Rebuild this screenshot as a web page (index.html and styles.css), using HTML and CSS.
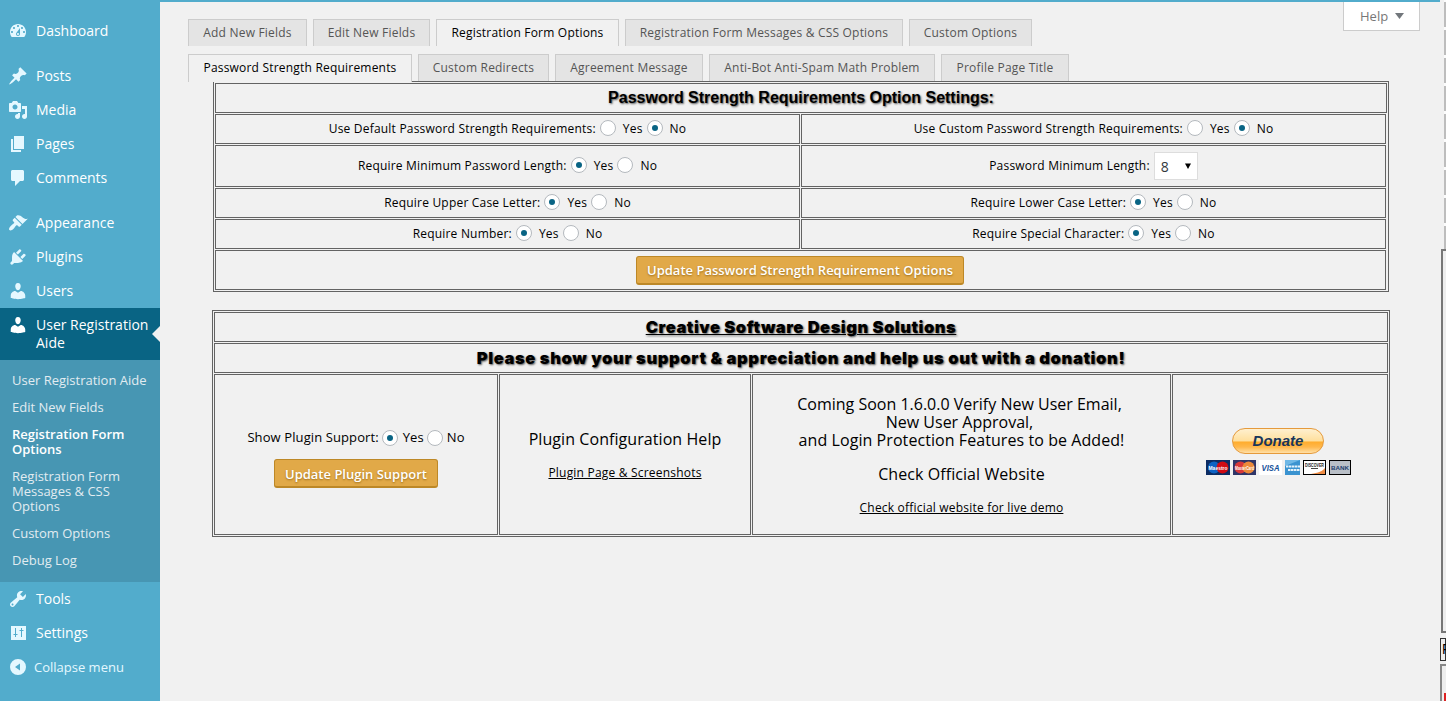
FILE: index.html
```html
<!DOCTYPE html>
<html lang="en">
<head>
<meta charset="utf-8">
<title>Registration Form Options</title>
<link rel="stylesheet" href="styles.css">
</head>
<body>
<div class="page">
<nav class="sidebar">
  <a class="item"><svg class="icon" viewBox="0 0 20 20"><path d="M3.76 16h12.48c1.1-1.37 1.76-3.11 1.76-5 0-4.42-3.58-8-8-8s-8 3.58-8 8c0 1.89.66 3.63 1.76 5zM10 4c.55 0 1 .45 1 1s-.45 1-1 1-1-.45-1-1 .45-1 1-1zM6 6c.55 0 1 .45 1 1s-.45 1-1 1-1-.45-1-1 .45-1 1-1zm8 0c.55 0 1 .45 1 1s-.45 1-1 1-1-.45-1-1 .45-1 1-1zm-5.37 5.55L12 7v6c0 1.1-.9 2-2 2s-2-.9-2-2c0-.57.24-1.08.63-1.45zM4 10c.55 0 1 .45 1 1s-.45 1-1 1-1-.45-1-1 .45-1 1-1zm12 0c.55 0 1 .45 1 1s-.45 1-1 1-1-.45-1-1 .45-1 1-1zm-5 3c0-.55-.45-1-1-1s-1 .45-1 1 .45 1 1 1 1-.45 1-1z" fill-rule="evenodd"/></svg><span>Dashboard</span></a>
  <div class="sep"></div>
  <a class="item"><svg class="icon" viewBox="0 0 20 20"><path d="M10.44 3.02l1.82-1.82 6.36 6.35-1.83 1.82c-1.05-.68-2.48-.57-3.41.36l-.75.75c-.92.93-1.04 2.35-.35 3.41l-1.83 1.82-2.41-2.41-2.8 2.79c-.42.42-3.38 2.71-3.8 2.29s1.86-3.39 2.28-3.81l2.79-2.79L4.1 9.36l1.83-1.82c1.05.69 2.48.57 3.4-.36l.75-.75c.93-.92 1.05-2.35.36-3.41z"/></svg><span>Posts</span></a>
  <a class="item"><svg class="icon" viewBox="0 0 20 20"><path d="M13 11V4c0-.55-.45-1-1-1h-1.67L9 1H5L3.67 3H2c-.55 0-1 .45-1 1v7c0 .55.45 1 1 1h10c.55 0 1-.45 1-1zM7 4.5c1.38 0 2.5 1.12 2.5 2.5S8.38 9.5 7 9.5 4.5 8.38 4.5 7 5.62 4.5 7 4.5zM14 6h5v10.5c0 1.38-1.12 2.5-2.5 2.5S14 17.88 14 16.5s1.12-2.5 2.5-2.5c.17 0 .34.02.5.05V9h-3V6zm-4 8.05V13h2v3.5c0 1.38-1.12 2.5-2.5 2.5S7 17.88 7 16.5 8.12 14 9.5 14c.17 0 .34.02.5.05z" fill-rule="evenodd"/></svg><span>Media</span></a>
  <a class="item"><svg class="icon" viewBox="0 0 20 20"><path d="M6 15V2h10v13H6zm-1 1h8v2H3V5h2v11z"/></svg><span>Pages</span></a>
  <a class="item"><svg class="icon" viewBox="0 0 20 20"><path d="M4.500 2h10c.8 0 1.500.7 1.500 1.500v8c0 .8-.7 1.500-1.500 1.500H12l-5 5v-5H4.500C3.700 13 3 12.300 3 11.500v-8C3 2.700 3.700 2 4.500 2z"/></svg><span>Comments</span></a>
  <div class="sep"></div>
  <a class="item"><svg class="icon" viewBox="0 0 20 20"><path d="M14.480 11.060L7.410 3.990l1.500-1.500c.5-.56 2.300-.47 3.510.32 1.210.8 1.430 1.280 2.910 2.100 1.180.64 2.450 1.260 4.450.85zm-.71.71L6.700 4.700 4.930 6.470c-.39.39-.39 1.020 0 1.410l1.060 1.060c.39.39.39 1.030 0 1.420-.6.6-1.430 1.110-2.210 1.690-.35.26-.7.53-1.010.84C1.430 14.230.4 16.080 1.400 17.070c.99 1 2.840-.03 4.180-1.360.31-.31.58-.66.85-1.020.57-.78 1.080-1.610 1.690-2.210.39-.39 1.020-.39 1.410 0l1.060 1.060c.39.39 1.020.39 1.410 0z"/></svg><span>Appearance</span></a>
  <a class="item"><svg class="icon" viewBox="0 0 20 20"><path d="M13.110 4.360L9.870 7.600 8 5.730l3.240-3.240c.35-.34 1.050-.2 1.560.32.52.51.66 1.210.31 1.550zm-8 1.770l.91-1.120 9.010 9.010-1.190.84c-.71.71-2.630 1.160-3.820 1.160H6.140L4.900 17.260c-.59.59-1.540.59-2.120 0-.59-.58-.59-1.530 0-2.120l1.240-1.240v-3.880c0-1.130.4-3.190 1.090-3.890zm7.260 3.970l3.240-3.240c.34-.35 1.040-.21 1.550.31.52.51.66 1.210.31 1.550l-3.240 3.250z"/></svg><span>Plugins</span></a>
  <a class="item"><svg class="icon" viewBox="0 0 20 20"><path d="M10 9.250c-2.270 0-2.730-3.440-2.730-3.440C7 4.020 7.820 2 9.970 2c2.160 0 2.980 2.020 2.710 3.810 0 0-.41 3.440-2.680 3.440zm0 2.570L12.720 10c2.390 0 4.520 2.330 4.520 4.530v2.490s-3.650 1.130-7.240 1.130c-3.650 0-7.240-1.130-7.240-1.130v-2.490c0-2.250 1.940-4.480 4.470-4.480z"/></svg><span>Users</span></a>
  <a class="item current"><svg class="icon" viewBox="0 0 20 20"><path d="M10 9.250c-2.270 0-2.730-3.440-2.730-3.440C7 4.020 7.820 2 9.970 2c2.160 0 2.980 2.020 2.710 3.810 0 0-.41 3.440-2.680 3.440zm0 2.570L12.720 10c2.390 0 4.520 2.330 4.520 4.530v2.490s-3.650 1.130-7.240 1.130c-3.650 0-7.240-1.130-7.240-1.130v-2.490c0-2.250 1.940-4.480 4.470-4.480z"/></svg><span>User Registration<br>Aide</span></a>
  <div class="submenu">
    <a>User Registration Aide</a>
    <a>Edit New Fields</a>
    <a class="on">Registration Form<br>Options</a>
    <a>Registration Form<br>Messages &amp; CSS<br>Options</a>
    <a>Custom Options</a>
    <a>Debug Log</a>
  </div>
  <a class="item"><svg class="icon" viewBox="0 0 20 20"><path d="M16.680 9.770c-1.340 1.340-3.300 1.670-4.950.99l-5.410 6.520c-.99.99-2.590.99-3.580 0s-.99-2.590 0-3.570l6.520-5.420c-.68-1.650-.35-3.610.99-4.950 1.280-1.280 3.120-1.620 4.720-1.060l-2.890 2.890 2.820 2.820 2.860-2.870c.53 1.580.18 3.390-1.080 4.650zM3.810 16.210c.4.39 1.040.39 1.430 0 .4-.4.4-1.040 0-1.430-.39-.4-1.030-.4-1.430 0-.39.39-.39 1.030 0 1.430z" fill-rule="evenodd"/></svg><span>Tools</span></a>
  <a class="item"><svg class="icon" viewBox="0 0 20 20"><path fill-rule="evenodd" d="M3 3h15v14H3zM7 5v6H5.500v1H7v2h1v-2h1.500v-1H8V5zM13 5v2h-1.500v1H13v6h1V8h1.500V7H14V5z"/></svg><span>Settings</span></a>
  <a class="item collapse"><svg class="icon" viewBox="0 0 20 20"><path fill-rule="evenodd" d="M10 2a8 8 0 1 0 0 16a8 8 0 1 0 0-16zM12 6.500v7L7 10z"/></svg><span>Collapse menu</span></a>
</nav>
<main class="content">
  <div class="help"><span>Help</span><svg width="9" height="6" viewBox="0 0 9 6"><path d="M0 0h9L4.500 6z"/></svg></div>
  <div class="tabs">
    <a class="w119">Add New Fields</a><a class="w117">Edit New Fields</a><a class="w183 on">Registration Form Options</a><a class="w278">Registration Form Messages &amp; CSS Options</a><a class="w123">Custom Options</a>
  </div>
  <div class="tabs sub">
    <a class="w224 on">Password Strength Requirements</a><a class="w131">Custom Redirects</a><a class="w148">Agreement Message</a><a class="w226">Anti-Bot Anti-Spam Math Problem</a><a class="w128">Profile Page Title</a>
  </div>
  <section class="grid settings">
    <div class="cell full head"><b>Password Strength Requirements Option Settings:</b></div>
    <div class="cell"><span>Use Default Password Strength Requirements:</span><i class="radio"></i><span>Yes</span><i class="radio sel"></i><span>No</span></div>
    <div class="cell"><span>Use Custom Password Strength Requirements:</span><i class="radio"></i><span>Yes</span><i class="radio sel"></i><span>No</span></div>
    <div class="cell"><span>Require Minimum Password Length:</span><i class="radio sel"></i><span>Yes</span><i class="radio"></i><span>No</span></div>
    <div class="cell"><span>Password Minimum Length:</span><div class="select"><span>8</span><svg width="6" height="6" viewBox="0 0 7 7"><path d="M0 .5h7L3.500 7z"/></svg></div></div>
    <div class="cell"><span>Require Upper Case Letter:</span><i class="radio sel"></i><span>Yes</span><i class="radio"></i><span>No</span></div>
    <div class="cell"><span>Require Lower Case Letter:</span><i class="radio sel"></i><span>Yes</span><i class="radio"></i><span>No</span></div>
    <div class="cell"><span>Require Number:</span><i class="radio sel"></i><span>Yes</span><i class="radio"></i><span>No</span></div>
    <div class="cell"><span>Require Special Character:</span><i class="radio sel"></i><span>Yes</span><i class="radio"></i><span>No</span></div>
    <div class="cell full act"><a class="button wide">Update Password Strength Requirement Options</a></div>
  </section>
  <section class="grid support">
    <div class="cell full black"><b class="under">Creative Software Design Solutions</b></div>
    <div class="cell full black"><b class="please">Please show your support &amp; appreciation and help us out with a donation!</b></div>
    <div class="cell col plug"><div class="line"><span>Show Plugin Support:</span><i class="radio sel"></i><span>Yes</span><i class="radio"></i><span>No</span></div><a class="button">Update Plugin Support</a></div>
    <div class="cell col conf"><span class="big">Plugin Configuration Help</span><span class="link">Plugin Page &amp; Screenshots</span></div>
    <div class="cell col soon"><span class="big lead">Coming Soon 1.6.0.0 Verify New User Email,</span><span class="big lead">New User Approval,</span><span class="big">and Login Protection Features to be Added!</span><span class="big check">Check Official Website</span><span class="link">Check official website for live demo</span></div>
    <div class="cell col pay">
      <div class="donate">Donate</div>
      <div class="cards">
        <svg width="24" height="15" viewBox="0 0 24 15"><rect width="24" height="15" fill="#0c2c63"/><circle cx="8" cy="7.500" r="6" fill="#0d63c4"/><circle cx="16.500" cy="7.500" r="6" fill="#d00b14"/><text x="12" y="9.500" class="mk" textLength="19" lengthAdjust="spacingAndGlyphs">Maestro</text></svg>
        <svg width="23" height="15" viewBox="0 0 23 15"><rect width="23" height="15" fill="#2f3568"/><circle cx="7.500" cy="7.500" r="6" fill="#d8383b"/><circle cx="15.500" cy="7.500" r="6" fill="#ec8a3a"/><text x="11.500" y="9.500" class="mk" textLength="19" lengthAdjust="spacingAndGlyphs">MasterCard</text></svg>
        <svg width="23" height="15" viewBox="0 0 23 15"><rect width="23" height="15" fill="#fff"/><text x="11.500" y="10.500" class="visa" textLength="18" lengthAdjust="spacingAndGlyphs">VISA</text></svg>
        <svg width="15" height="15" viewBox="0 0 15 15"><rect width="15" height="15" fill="#3a93d0"/><path d="M0 0h15L0 6z" fill="#6fb8e6"/><path d="M1 6.500h14M3 10h12" stroke="#e4f2fb" stroke-width="2" stroke-dasharray="2.500 .5"/></svg>
        <svg width="23" height="15" viewBox="0 0 23 15"><rect x=".5" y=".5" width="22" height="14" fill="#fff" stroke="#000"/><path d="M22 8v6H8C15 13 20 11 22 8z" fill="#ee8b43"/><text x="11.500" y="7" class="disc" textLength="19" lengthAdjust="spacingAndGlyphs">DISCOVER</text><path d="M8 8.500h7" stroke="#444"/></svg>
        <svg width="22" height="15" viewBox="0 0 22 15"><rect x=".5" y=".5" width="21" height="14" fill="#b9bfc7" stroke="#000"/><text x="11" y="9.500" class="bank" textLength="18" lengthAdjust="spacingAndGlyphs">BANK</text></svg>
      </div>
    </div>
  </section>
</main>
<aside class="edge"><div class="ticks"></div><div class="pane"></div><div class="field">F</div><div class="pane2"><i></i></div></aside>
</div>
</body>
</html>
```
FILE: styles.css
```css
* { box-sizing: border-box; }
body { margin: 0; background: #f1f1f1; font-family: "Open Sans", "Noto Sans", sans-serif; font-size: 12px; color: #000; }
.page { display: flex; width: 1446px; height: 701px; overflow: hidden; }
.sidebar { width: 160px; flex: none; padding-top: 14px; background: #52accc; }
.item { display: flex; padding: 7px 0 7px 8px; height: 34px; gap: 8px; font-size: 14px; line-height: 18px; color: #fff; }
.item span { padding-top: 1px; white-space: nowrap; }
.icon { width: 20px; height: 20px; flex: none; fill: #e5f8ff; }
.sep { height: 11px; }
.current { position: relative; height: 52px; background: #096484; }
.current .icon { fill: #fff; }
.current::after { content: ""; position: absolute; right: 0; top: 18px; border: 8px solid transparent; border-left: 0; border-right-color: #f1f1f1; }
.submenu { height: 222px; padding: 7px 0 8px 12px; background: #4796b3; }
.submenu a { display: block; padding: 6px 0; font-size: 13px; line-height: 15px; color: #e2ecf1; white-space: nowrap; }
.submenu .on { color: #fff; font-weight: 600; }
.collapse { font-size: 13px; gap: 6px; color: #e5f8ff; }

.content { width: 1280px; flex: none; padding-left: 28px; border-top: 2px solid #52accc; display: flex; flex-direction: column; }
.help { align-self: flex-end; flex: none; width: 77px; height: 29px; margin: 0 20px -12px 0; padding-left: 16px; display: flex; align-items: center; gap: 7px; background: #fff; border: 1px solid #ccc; border-top: 0; font-size: 13px; color: #777; }
.help svg { fill: #72777c; }
.tabs { display: flex; gap: 6px; height: 27px; flex: none; letter-spacing: .2px; }
.tabs a { height: 27px; padding-bottom: 1px; display: flex; justify-content: center; align-items: center; border: 1px solid #ccc; border-bottom: 0; background: #e4e4e4; color: #555; white-space: nowrap; }
.tabs .on { background: #f1f1f1; color: #000; }
.sub { margin-top: 8px; position: relative; z-index: 1; }
.sub .on { height: 28px; padding-bottom: 2px; }
.w119 { width: 119px; } .w117 { width: 117px; } .w183 { width: 183px; } .w278 { width: 278px; } .w123 { width: 123px; }
.w224 { width: 224px; } .w131 { width: 131px; } .w148 { width: 148px; } .w226 { width: 226px; } .w128 { width: 128px; }

.grid { display: grid; gap: 1px; padding: 1px; border: 1px solid #636363; flex: none; }
.cell { border: 1px solid #636363; padding-bottom: 2px; display: flex; justify-content: center; align-items: center; white-space: nowrap; letter-spacing: .2px; }
.full { grid-column: 1 / -1; padding-bottom: 0; letter-spacing: 0; }
.settings { width: 1176px; margin-left: 25px; grid-template-columns: 585px 585px; grid-template-rows: 30px 30px 42px 30px 30px 40px; }
.head { margin-right: -1px; font: bold 16px "Liberation Sans", sans-serif; text-shadow: 1px 1px 2px #555; }
.radio { width: 16px; height: 16px; flex: none; margin: 0 7px 0 4px; border: 1px solid #b4b9be; border-radius: 50%; background: #fff; display: flex; align-items: center; justify-content: center; }
.sel::before { content: ""; width: 6px; height: 6px; border-radius: 50%; background: #096484; }
.select { width: 44px; height: 28px; margin: 2px 0 0 4px; padding: 0 6px; display: flex; align-items: center; justify-content: space-between; background: #fff; border: 1px solid #ddd; font-size: 14px; color: #32373c; }
.button { height: 29px; padding: 1px 10px 0; display: flex; align-items: center; background: #e1a948; border: 1px solid #bd8827; border-bottom-width: 2px; border-radius: 3px; color: #fff; font-size: 13px; font-weight: 600; text-shadow: 0 1px 2px #9c6d19; letter-spacing: 0; }
.wide { width: 328px; justify-content: center; }
.act { padding-right: 1px; }
.support { width: 1178px; margin: 18px 0 0 24px; grid-template-columns: 284px 252px 419px 216px; grid-template-rows: 30px 30px 161px; }
.black { font: 900 16.5px Inter, sans-serif; letter-spacing: .52px; text-shadow: 1px 1px 2px #555; }
.under { text-decoration: underline; }
.please { letter-spacing: .63px; }
.col { flex-direction: column; letter-spacing: 0; padding: 0; }
.plug { padding-top: 7px; }
.conf, .soon { padding-top: 2px; }
.line { display: flex; font-size: 13px; align-items: flex-start; line-height: 18px; margin-bottom: 13px; letter-spacing: .1px; }
.line .radio { margin: 2px 4px 0 3px; }
.line .sel { margin-right: 5px; }
.big { font-size: 16px; line-height: 18px; letter-spacing: .07px; }
.lead { margin-left: -4px; letter-spacing: 0; }
.link { text-decoration: underline; line-height: 18px; margin-top: 16px; letter-spacing: .2px; }
.check { margin-top: 16px; }
.pay { padding: 0 4px 6px 0; }
.donate { width: 92px; height: 26px; margin-bottom: 6px; border: 1px solid #e59a3c; border-radius: 13px; background: linear-gradient(#fff0cf, #ffdf9c 50%, #ffac2d 54%, #ffb84c 75%, #ffe0a8); font: italic bold 15px/24px "Liberation Sans", sans-serif; color: #18365b; text-align: center; }
.cards { display: flex; gap: 3px; }
.mk, .visa, .disc, .bank { font-family: "Liberation Sans", sans-serif; font-weight: bold; text-anchor: middle; font-size: 5px; fill: #fff; }
.visa { font-size: 8.5px; font-style: italic; fill: #14509a; }
.disc { fill: #222; }
.bank { font-size: 6px; fill: #23406f; }
.edge { width: 6px; flex: none; display: flex; flex-direction: column; overflow: hidden; }
.ticks { height: 249px; flex: none; margin-left: 4px; background: repeating-linear-gradient(#fbfbfb 0 2px, #bdbdbd 2px 27px, #fbfbfb 27px 28px); }
.pane { height: 384px; flex: none; border: 2px solid #777; border-right: 0; margin-left: 1px; background: #eee; }
.field { height: 23px; flex: none; margin-top: 5px; border: 1px solid #333; font: 14px/21px "Liberation Sans", sans-serif; padding-left: 1px; background: #eee; }
.pane2 { height: 40px; flex: none; margin-top: 3px; border: 2px solid #888; border-right: 0; padding: 27px 0 0 2px; background: #eee; }
.pane2 i { display: block; height: 12px; background: #d22; }
```
